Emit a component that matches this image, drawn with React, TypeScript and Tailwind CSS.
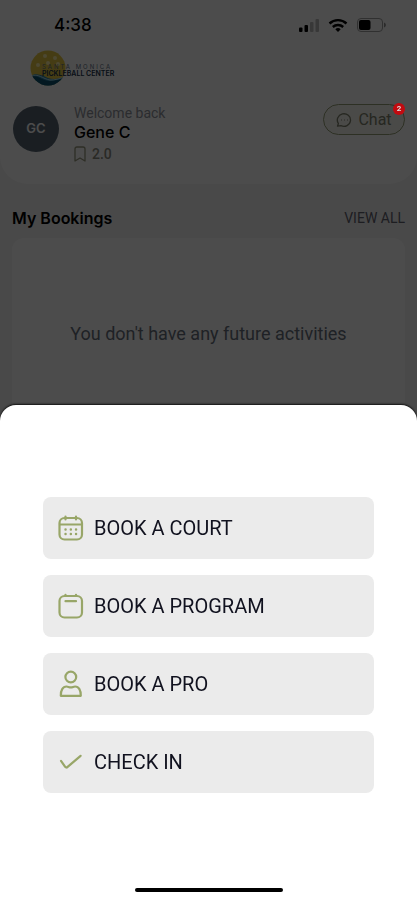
import type { ReactNode } from "react";

const iconProps = {
  viewBox: "0 0 26 28",
  fill: "none",
  stroke: "#98a668",
  strokeWidth: 2.2,
  strokeLinecap: "round" as const,
  strokeLinejoin: "round" as const,
  className: "h-7 w-[26px] shrink-0",
  "aria-hidden": true,
};

function CourtIcon() {
  return (
    <svg {...iconProps}>
      <rect x="1.5" y="4" width="22.5" height="21.5" rx="5" />
      <path d="M2 10.5h22M7.5 2.6V5.5M18 2.6V5.5" />
      <path d="M7.5 15.5h.1M12.8 15.5h.1M18 15.5h.1M7.5 20h.1M12.8 20h.1M18 20h.1" strokeWidth="2.4" />
    </svg>
  );
}

function ProgramIcon() {
  return (
    <svg {...iconProps}>
      <rect x="1.5" y="4" width="22.5" height="21.5" rx="5" />
      <path d="M7.5 2.8V4M18 2.8V4M7.5 9.2h10.5" />
    </svg>
  );
}

function ProIcon() {
  return (
    <svg {...iconProps}>
      <circle cx="12.8" cy="7" r="5.4" />
      <path d="M2.8 25.8c-.2-5.5 2-9.3 5.7-9.3 1.6 0 2.4.9 4.3.9s2.700-.9 4.300-.9c3.700 0 5.900 3.800 5.700 9.300z" />
    </svg>
  );
}

function CheckIcon() {
  return (
    <svg {...iconProps}>
      <path d="M3 12.8L7.2 18.8Q8.3 20.2 9.6 18.9L22.6 7.8" />
    </svg>
  );
}

const actions: { label: string; icon: ReactNode }[] = [
  { label: "BOOK A COURT", icon: <CourtIcon /> },
  { label: "BOOK A PROGRAM", icon: <ProgramIcon /> },
  { label: "BOOK A PRO", icon: <ProIcon /> },
  { label: "CHECK IN", icon: <CheckIcon /> },
];

function StatusBar() {
  return (
    <div className="flex h-[50px] items-center justify-between pl-[54px] pr-[30px]">
      <span className="font-['Inter'] text-[17px] font-medium leading-6 text-black">4:38</span>
      <div className="flex items-center gap-2">
        <svg viewBox="0 0 22 16" className="h-4 w-[22px]" aria-hidden="true">
          <rect x="1" y="10.5" width="3.5" height="4.5" rx="1" />
          <rect x="6.5" y="8" width="3.5" height="7" rx="1" />
          <rect x="12" y="5" width="3.5" height="10" rx="1" fill="#bdbdbd" />
          <rect x="17.5" y="2" width="3.5" height="13" rx="1" fill="#bdbdbd" />
        </svg>
        <svg viewBox="0 0 20 16" className="h-4 w-5" fill="none" stroke="black" strokeWidth="2.4" aria-hidden="true">
          <path d="M1.5 6.5a12.5 12.5 0 0 1 17 0M4.8 10a7.8 7.8 0 0 1 10.4 0" />
          <path d="M7.3 12.2a4.2 4.2 0 0 1 5.4 0L10 15z" fill="black" stroke="none" />
        </svg>
        <svg viewBox="0 0 31 16" className="h-4 w-[31px]" aria-hidden="true">
          <rect x="1.5" y="1.5" width="25" height="13" rx="3.5" fill="none" stroke="#a0a0a0" />
          <rect x="3" y="3" width="11.5" height="10" rx="2" />
          <path d="M28 5.5c2.5 1 2.5 4 0 5z" fill="#909090" />
        </svg>
      </div>
    </div>
  );
}

function Logo() {
  return (
    <div className="flex h-9 items-center pl-[30px]">
      <svg viewBox="0 0 36 36" className="h-9 w-9" aria-hidden="true">
        <defs>
          <clipPath id="ball">
            <circle cx="18" cy="18" r="17.5" />
          </clipPath>
        </defs>
        <g clipPath="url(#ball)">
          <path d="M0 0h36v36H0z" fill="#e8ca45" />
          <g fill="#fff1a8">
            <circle cx="15" cy="6" r="2" />
            <circle cx="25" cy="8" r="2" />
            <circle cx="8" cy="15" r="2" />
            <circle cx="18" cy="13" r="2" />
            <circle cx="28" cy="14" r="2" />
          </g>
          <path d="M0 26c7-4 13 0 18 2s12 1 18-2v10H0z" fill="#2b83aa" />
          <path d="M0 27c8-3 12 4 20 4 5 0 9-2 16-3v8H0z" fill="#0c526f" />
          <path d="M1 26c7-3 12 3 19 4 5 0 9-1 14-3" fill="none" stroke="#b4dce4" strokeWidth="1" />
        </g>
      </svg>
      <div className="relative -ml-6 pt-1 font-['Inter'] text-[#18334c]">
        <div className="text-[6px] leading-[6px] tracking-[2px] text-[#5f7486]">SANTA MONICA</div>
        <div className="text-[7px] font-semibold leading-[7px]">PICKLEBALL CENTER</div>
      </div>
    </div>
  );
}

function ProfileHeader() {
  return (
    <header className="h-[184px] rounded-b-[28px] bg-white">
      <StatusBar />
      <Logo />
      <div className="mt-[18px] flex items-start pl-[13px] pr-3">
        <div className="mt-0.5 flex h-[46px] w-[46px] shrink-0 items-center justify-center rounded-full bg-[#586674] font-['Inter'] text-[13px] font-semibold text-white">
          GC
        </div>
        <div className="ml-[15px] grow">
          <p className="text-[14px] leading-[18px] text-[#8f959d]">Welcome back</p>
          <p className="font-['Inter'] text-[16px] font-medium leading-5 text-black">Gene C</p>
          <div className="flex items-center gap-1.5 text-[14px] font-medium leading-6 text-[#8c8c80]">
            <svg viewBox="0 0 12 16" className="h-4 w-3" fill="none" stroke="#9a9b80" strokeWidth="1.3" strokeLinejoin="round" aria-hidden="true">
              <path d="M1 3a2 2 0 0 1 2-2h6a2 2 0 0 1 2 2v12l-5-3-5 3z" />
            </svg>
            2.0
          </div>
        </div>
        <button className="flex h-[31px] w-[82px] items-center justify-center gap-1.5 rounded-full border border-[#98a078] bg-[#f7f8f1] text-[16px] text-[#80836f]">
          <svg viewBox="0 0 16 16" className="h-4 w-4" fill="none" stroke="#80836f" strokeWidth="1.3" strokeLinecap="round" strokeLinejoin="round" aria-hidden="true">
            <path d="M1.5 14.2l.9-2.7A6.6 6.3 0 1 1 5 13.7z" />
            <path d="M5.5 8h.1M8.5 8h.1M11.5 8h.1" strokeWidth="1" />
          </svg>
          Chat
        </button>
      </div>
    </header>
  );
}

function Bookings() {
  return (
    <section className="px-3 pt-[22px]">
      <div className="flex items-center justify-between">
        <h2 className="font-['Inter'] text-[16px] font-semibold leading-6 text-black">My Bookings</h2>
        <a href="#" className="text-[14px] leading-6 text-[#626270]">VIEW ALL</a>
      </div>
      <div className="mt-2 flex h-48 items-center justify-center rounded-xl bg-white">
        <p className="text-[18px] leading-6 text-[#68717d]">You don't have any future activities</p>
      </div>
    </section>
  );
}

export default function App() {
  return (
    <div className="min-h-screen bg-[#f6f6f6] font-['Roboto',sans-serif]">
      <ProfileHeader />
      <Bookings />

      {/* Backdrop */}
      <div className="fixed inset-0 bg-black/70" />

      {/* The unread badge stays lit above the backdrop */}
      <span className="absolute right-3 top-[103px] flex h-3 w-3 items-center justify-center rounded-full bg-[#c20a10] text-[8px] font-bold leading-3 text-[#ddd]">
        2
      </span>

      {/* Action sheet */}
      <div className="fixed inset-x-0 bottom-0 rounded-t-[16px] bg-white shadow-[0_-1px_2px_#111]">
        <div className="flex flex-col gap-4 px-[43px] pt-[92px]">
          {actions.map((action) => (
            <button
              key={action.label}
              className="flex h-[62px] items-center gap-2.5 rounded-lg bg-[#ebebeb] pl-[15px] text-[20px] text-[#11121f]"
            >
              {action.icon}
              {action.label}
            </button>
          ))}
        </div>
        <div className="mx-auto mb-2 mt-[95px] h-1 w-[148px] rounded-full bg-black" />
      </div>
    </div>
  );
}
